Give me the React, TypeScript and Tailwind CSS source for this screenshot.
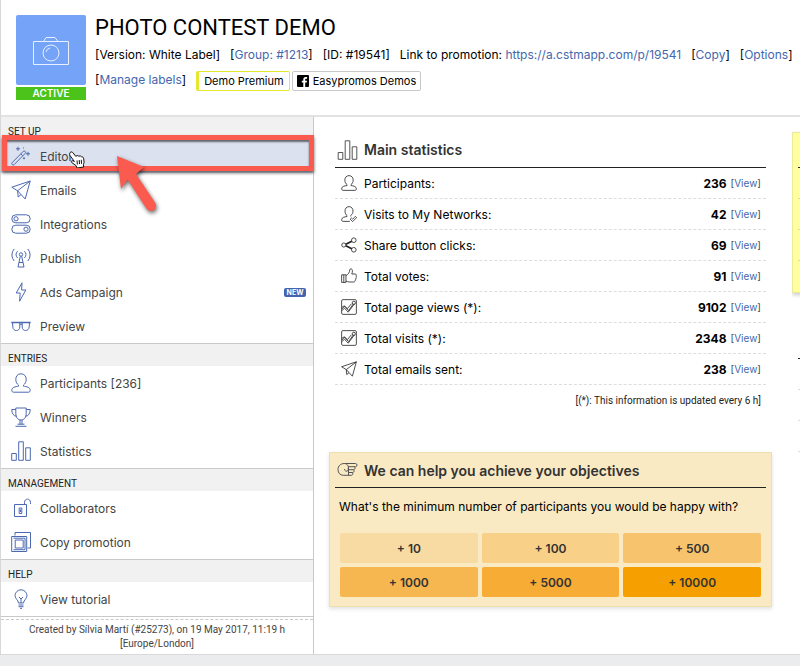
import clsx from "clsx";
import type { ReactNode } from "react";

const icons: Record<string, ReactNode> = {
  wand: (
    <>
      <path d="M1.2 16.6 12.2 5.4a1.4 1.4 0 0 1 2 2L3.2 18.6a1.4 1.4 0 0 1-2-2zM9.8 7.8l2 2" />
      <path d="M7 .8v4M5 2.8h4M17 5.8v4M15 7.8h4M13 11.3v2M12 12.3h2M12.5 1.5v1" />
    </>
  ),
  plane: <path d="M19.2 1 .8 7.2l5.8 3.6L14.2 19 19.2 1zM19.2 1 6.6 10.800l.6 6.200 2.800-2.500" />,
  toggles: (
    <>
      <rect x=".8" y=".8" width="18.4" height="8" rx="4" />
      <rect x=".8" y="11.2" width="18.4" height="8" rx="4" />
      <circle cx="5" cy="4.8" r="2.1" />
      <circle cx="15" cy="15.2" r="2.1" />
    </>
  ),
  antenna: (
    <>
      <circle cx="10" cy="6.5" r="1.7" />
      <path d="M9.3 8.2 7 19h6L10.7 8.2M8 14.5h4M6.6 3.2a5 5 0 0 0 0 6.8M13.4 3.2a5 5 0 0 1 0 6.8M3.2 1a9 9 0 0 0 0 12M16.8 1a9 9 0 0 1 0 12" />
    </>
  ),
  bolt: <path d="M11 .8 5.2 11h4L8.6 19.2 14.8 8h-4.2L11 .8z" />,
  glasses: (
    <>
      <path strokeWidth="1.5" d="M.3 6.500h19.400" />
      <path d="M1.500 6.500h7.300v4.500c0 4.700-6.600 4.700-7 0zM11.200 6.500h7.300l-.3 4.500c-.4 4.700-7 4.700-7 0zM8.800 8.500q1.200-1 2.400 0" />
    </>
  ),
  user: (
    <path d="M10 .8c3.4 0 5.2 2.5 5.2 5.6 0 2.6-1.2 4.6-2.7 5.6v1.2c3 .4 6.7 1 6.7 4.1 0 1.2-.6 1.9-1.8 1.9H2.6c-1.2 0-1.8-.7-1.8-1.9 0-3.1 3.7-3.7 6.7-4.1V12C6 11 4.8 9 4.8 6.4 4.8 3.300 6.600.8 10 .8z" />
  ),
  userCheck: (
    <>
      <path d="M12.200 13c-.4-.3-.3-1 .1-1.300 1.500-1 2.700-3 2.700-5.300C15 3.300 13.300.8 10 .8S5 3.300 5 6.400C5 9 6 11 7.500 12v1.200c-3 .4-6.700 1-6.700 4.100 0 1.200.6 1.900 1.800 1.900H11" />
      <path d="m11.500 16.500 1.500-1.500 1.500 1.500 3.500-3.500 1.500 1.500-5 5z" />
    </>
  ),
  trophy: (
    <path d="M4.800 1h10.400v5.500c0 4-2 6.500-5.200 6.500S4.800 10.500 4.800 6.500V1zM4.800 2.500H.8c0 4 1.500 6.500 5 6.800M15.200 2.500h4c0 4-1.500 6.500-5 6.800M9 13v4.500M11 13v4.500M6.500 17.200h7M4.500 19.300h11" />
  ),
  bars: <path d="M.7 12.500h4.600v6.800H.7zM7.700.8h4.600v18.500H7.700zM14.700 6.800h4.600v12.500h-4.600z" />,
  lock: (
    <>
      <path d="M3.500 6.500h12v12h-12zM13.500 6.500V4.500c0-4.500 6-4.500 6 0v1.500" />
      <path d="M8.200 10h2.600v5.500H8.200zM9.500 11.500v2.500" />
    </>
  ),
  copy: <path d="M.7 4.500h15v15h-15zM4.200 8h8v8h-8zM2.500 6.200h11.500v11.500H2.500M4 3.500v-3h15.500v15.500H16.500" />,
  bulb: (
    <>
      <path d="M7.500 14c0-3-3.500-4-3.500-7.500A6 6 0 0 1 10 .8a6 6 0 0 1 6 5.700c0 3.500-3.500 4.500-3.500 7.500z" />
      <path d="M7.500 16h5M7.500 17.700h5M9 19.300h2M8 8l2 2 2-2M10 10v4" />
    </>
  ),
  share: (
    <>
      <circle cx="3.500" cy="10" r="2.600" />
      <circle cx="16" cy="4" r="2.900" />
      <circle cx="16" cy="16" r="2.900" />
      <path strokeWidth="2.200" d="M6 9l7.500-3.700M6 11l7.500 3.700" />
    </>
  ),
  thumb: (
    <path d="M.8 8.500h5.400v9.500H.8zM3.500 8.500V18M6.200 9.500c3-1.500 4.600-4 4.800-7.500 0-1.500 3.300-1.300 3.300 1.300 0 2-.5 3.200-.8 4.200h4c1.700 0 2 1.500 1.200 2.500.9.800.7 2-.3 2.500.7 1 .3 2-.7 2.400.3 1.200-.3 2.600-2 2.600h-5c-2 0-3-.8-4.500-1" />
  ),
  chart: (
    <>
      <rect x=".8" y=".8" width="18.400" height="18.400" rx="1.500" />
      <path d="M1 12.500 4.500 9l5 5.500 6-8.500M1 14.500l3.500-3 4.500 5 7.500-10M1 10.500l3-2 4 3.500 5-6" />
      <circle cx="16" cy="4.800" r="2" />
    </>
  ),
  hand: (
    <path d="M7 3.500h11c2 0 2 3.200 0 3.200h-7M17 6.700c1.200 1.300.3 3-.8 3H11M16 9.700c1.200 1.300.3 2.800-.8 2.800H11M15 12.500c.7 1.500 0 2.800-1 2.800H6C2.500 15.300.5 13 .5 9.500S3 3.500 7 3.500c3.500.5 4.500 3 3.500 7-1.500 1.500-3.500.5-3.500-1.500M11 6.700v8.500" />
  ),
};

function Icon({ name, className }: { name: string; className?: string }) {
  return (
    <svg
      viewBox="0 0 20 20"
      fill="none"
      stroke="currentColor"
      strokeLinejoin="round"
      className={clsx("shrink-0", className)}
    >
      {icons[name]}
    </svg>
  );
}

const menu = [
  {
    title: "SET UP",
    items: [
      { icon: "wand", label: "Editor", active: true },
      { icon: "plane", label: "Emails" },
      { icon: "toggles", label: "Integrations" },
      { icon: "antenna", label: "Publish" },
      { icon: "bolt", label: "Ads Campaign", badge: "NEW" },
      { icon: "glasses", label: "Preview" },
    ],
  },
  {
    title: "ENTRIES",
    items: [
      { icon: "user", label: "Participants [236]" },
      { icon: "trophy", label: "Winners" },
      { icon: "bars", label: "Statistics" },
    ],
  },
  {
    title: "MANAGEMENT",
    items: [
      { icon: "lock", label: "Collaborators" },
      { icon: "copy", label: "Copy promotion" },
    ],
  },
  { title: "HELP", items: [{ icon: "bulb", label: "View tutorial" }] },
];

const stats = [
  { icon: "user", label: "Participants:", value: 236 },
  { icon: "userCheck", label: "Visits to My Networks:", value: 42 },
  { icon: "share", label: "Share button clicks:", value: 69 },
  { icon: "thumb", label: "Total votes:", value: 91 },
  { icon: "chart", label: "Total page views (*):", value: 9102 },
  { icon: "chart", label: "Total visits (*):", value: 2348 },
  { icon: "plane", label: "Total emails sent:", value: 238 },
];

const goals = [
  { label: "+ 10", color: "bg-[#f8dba3]" },
  { label: "+ 100", color: "bg-[#f8d088]" },
  { label: "+ 500", color: "bg-[#f7c36c]" },
  { label: "+ 1000", color: "bg-[#f6b751]" },
  { label: "+ 5000", color: "bg-[#f6ac35]" },
  { label: "+ 10000", color: "bg-[#f5a000]" },
];

function BracketLink({ children }: { children: ReactNode }) {
  return (
    <span>
      [
      <a href="#" className="text-[#4467ad]">
        {children}
      </a>
      ]
    </span>
  );
}

function Header() {
  return (
    <header className="flex h-[117px] gap-[9px] border-b-2 border-[#e2e2e2] pt-[15px] pl-[15px]">
      <div className="w-[70px] shrink-0">
        <div className="flex h-[70px] items-center justify-center rounded-xs bg-[#74a3f8]">
          <svg viewBox="0 0 36 28" fill="none" stroke="#e6f0ff" className="mt-0.5 h-7 w-9">
            <path d="M.5 4.500h35v23H.5zM10.500 4.500l2.500-4h9l3 4" />
            <circle cx="18" cy="16" r="8" />
            <path d="M13 15a5 5 0 0 1 4-4" />
          </svg>
        </div>
        <div className="mt-0.5 h-[13px] bg-[#4bc31b] text-center text-[10px] leading-[13px] font-semibold text-white">
          ACTIVE
        </div>
      </div>
      <div className="whitespace-nowrap">
        <h1 className="font-['Roboto',sans-serif] text-[22px] leading-[26px]">PHOTO CONTEST DEMO</h1>
        <div className="mt-1 flex gap-[10px] text-[12px] leading-5">
          <span>[Version: White Label]</span>
          <BracketLink>Group: #1213</BracketLink>
          <span>[ID: #19541]</span>
          <span>
            Link to promotion:{" "}
            <a href="#" className="text-[#4467ad]">
              https://a.cstmapp.com/p/19541
            </a>
          </span>
          <BracketLink>Copy</BracketLink>
          <BracketLink>Options</BracketLink>
        </div>
        <div className="mt-[6px] flex text-[12px] leading-[18px]">
          <BracketLink>Manage labels</BracketLink>
          <button className="ml-[10px] h-5 rounded-xs border border-l-3 border-[#e6e82e] px-[5px] text-[11px]">
            Demo Premium
          </button>
          <button className="ml-0.5 flex h-5 items-center gap-1 rounded-xs border border-[#c8c8c8] px-1 text-[11px]">
            <svg viewBox="0 0 12 12" className="h-3 w-3">
              <rect width="12" height="12" rx="1" />
              <path d="M8.200 12V7.500h1.500l.3-1.800H8.200V4.600c0-.6.200-.9 1-.9h.9V2.100C9.800 2 9.300 2 8.700 2 7.100 2 6.300 3 6.300 4.400v1.300H4.800v1.800h1.500V12z" fill="#fff" />
            </svg>
            Easypromos Demos
          </button>
        </div>
      </div>
    </header>
  );
}

// Red frame, arrow and pointer drawn over the highlighted menu entry
function Callout() {
  return (
    <>
      <div className="pointer-events-none absolute -top-1 -right-px bottom-[2px] left-px z-10 border-5 border-[#fb5b4e] shadow-[0_2px_3px_rgba(0,0,0,0.6),inset_0_2px_2px_rgba(0,0,0,0.55)]" />
      <svg viewBox="0 0 50 64" className="pointer-events-none absolute top-[14px] left-[113px] z-20 h-16 w-[50px] drop-shadow-[1px_2px_2px_rgba(0,0,0,0.6)]">
        <path
          d="M3 3l27 11-8 7 19 28.500c4 6.500-4 12-8.500 6L13.500 26.500 7 36z"
          fill="#fb5b4e"
        />
      </svg>
      <svg viewBox="0 0 16 17" className="pointer-events-none absolute top-[12px] left-[68px] z-20 h-[17px] w-4">
        <path
          d="M1.200 1.500c1-1.200 2.300-.4 2.900.4l2.600 3.400 1.600-.8 1.500.7 1.500-.3 1.200.9c1.500-.2 2 .8 2.200 2l.4 3.600-.7 2.100.3 2.500-6.500 1-1-2.200-4.500-3.300c-1-.9-.1-2.200 1.200-1.700l1.500.7L1 4.500C.5 3.300.5 2.300 1.200 1.500z"
          fill="#fff"
          stroke="#111"
        />
        <path d="M8 9.500l.4 4M10.200 9l.3 4M12.300 8.800l.2 4" stroke="#111" />
      </svg>
    </>
  );
}

function Sidebar() {
  return (
    <aside className="w-[313px] shrink-0 border-r border-[#c9c9cb]">
      <nav>
        {menu.map((section, i) => (
          <section key={section.title} className={clsx("border-[#c9c9cb]", i > 0 && "border-t")}>
            <h2 className="h-[22px] bg-[#f1f1f1] pt-[7px] pl-[7px] font-['Roboto',sans-serif] text-[10px] leading-[15px] text-[#222]">
              {section.title}
            </h2>
            <ul>
              {section.items.map((item) => (
                <li key={item.label} className="relative">
                  <a
                    href="#"
                    className={clsx(
                      "flex h-[34px] items-center gap-[9px] pr-[7px] pl-[10px] text-[12px] text-[#444]",
                      item.active && "bg-[#dbe1ef]"
                    )}
                  >
                    <Icon name={item.icon} className="h-5 w-5 text-[#4b68b0]" />
                    <span className="pt-0.5">{item.label}</span>
                    {item.badge && (
                      <span className="ml-auto h-[9px] w-[22px] rounded-xs bg-[#4563ad] text-center text-[7px] leading-[9px] font-bold text-white">
                        {item.badge}
                      </span>
                    )}
                  </a>
                  {item.active && <Callout />}
                </li>
              ))}
            </ul>
          </section>
        ))}
      </nav>
      <div className="border-t border-[#c9c9cb] pt-0.5">
        <p className="border-t border-dashed border-[#c9c9cb] px-6 pt-[3px] pb-[3px] text-center font-['Roboto',sans-serif] text-[10px] leading-[14px] text-[#444]">
          Created by Sílvia Martí (#25273), on 19 May 2017, 11:19 h
          <br />
          [Europe/London]
        </p>
      </div>
    </aside>
  );
}

function MainStatistics() {
  return (
    <section className="px-[6px]">
      <h2 className="flex h-9 items-center gap-[6px] border-b border-[#222] pl-0.5 text-[14px] font-semibold text-[#333]">
        <Icon name="bars" className="h-5 w-[21px] text-[#555]" />
        Main statistics
      </h2>
      <ul>
        {stats.map((stat) => (
          <li
            key={stat.label}
            className="flex h-[31px] items-center border-b border-dashed border-[#ddd] pr-[5px] pl-[6px] text-[12px]"
          >
            <Icon name={stat.icon} className="mr-[7px] h-4 w-4 text-[#222]" />
            <span className="pt-0.5">{stat.label}</span>
            <strong className="mr-1 ml-auto pt-0.5 font-bold">{stat.value}</strong>
            <span className="text-[10px] text-[#444]">
              <BracketLink>View</BracketLink>
            </span>
          </li>
        ))}
      </ul>
      <p className="pt-2 pr-[5px] text-right font-['Roboto',sans-serif] text-[10px] leading-4 text-[#222]">
        [(*): This information is updated every 6 h]
      </p>
    </section>
  );
}

function Objectives() {
  return (
    <section className="mt-[43px] border border-[#eedfb0] bg-[#f9eac4] px-[5px] pb-[9px] shadow-[0_2px_4px_rgba(0,0,0,0.12)]">
      <h2 className="flex h-[35px] items-center gap-[6px] border-b border-[#222] pl-0.5 text-[14px] font-semibold text-[#333]">
        <Icon name="hand" className="h-5 w-[21px] text-[#555]" />
        We can help you achieve your objectives
      </h2>
      <p className="px-1 pt-[9px] text-[12px] leading-5">
        What's the minimum number of participants you would be happy with?
      </p>
      <div className="mt-4 grid grid-cols-3 gap-1 px-[5px]">
        {goals.map((goal) => (
          <button
            key={goal.label}
            className={clsx("h-[30px] rounded-xs pt-0.5 text-[12px] font-semibold text-[#333]", goal.color)}
          >
            {goal.label}
          </button>
        ))}
      </div>
    </section>
  );
}

// Second column, mostly outside a narrow window
function NotesColumn() {
  return (
    <div className="w-2 shrink-0 overflow-hidden pt-[15px]">
      <div className="w-[443px]">
        <div className="h-[161px] border border-[#eaea9a] bg-[#ffff9e] px-[5px] shadow-[0_2px_4px_rgba(0,0,0,0.2)]">
          <div className="h-[35px] border-b border-[#222]" />
          <div className="h-[31px] border-b border-dashed border-[#dcdc9c]" />
          <div className="h-[31px] border-b border-dashed border-[#dcdc9c]" />
          <div className="h-[31px] border-b border-dashed border-[#dcdc9c]" />
        </div>
        <div className="px-[6px] pt-[30px]">
          <div className="h-9 border-b border-[#222]" />
          <div className="h-[31px] border-b border-dashed border-[#ddd]" />
          <div className="h-[31px] border-b border-dashed border-[#ddd]" />
          <div className="h-[31px] border-b border-dashed border-[#ddd]" />
        </div>
      </div>
    </div>
  );
}

export default function App() {
  return (
    <div className="min-h-screen overflow-hidden bg-[#ebecee] font-['Inter',sans-serif] text-black">
      <div className="border-b border-l border-[#d8d8da] bg-white">
        <Header />
        <div className="flex">
          <Sidebar />
          <main className="min-w-0 flex-1 pt-[15px] pr-5 pl-[15px]">
            <MainStatistics />
            <Objectives />
          </main>
          <NotesColumn />
        </div>
      </div>
    </div>
  );
}
